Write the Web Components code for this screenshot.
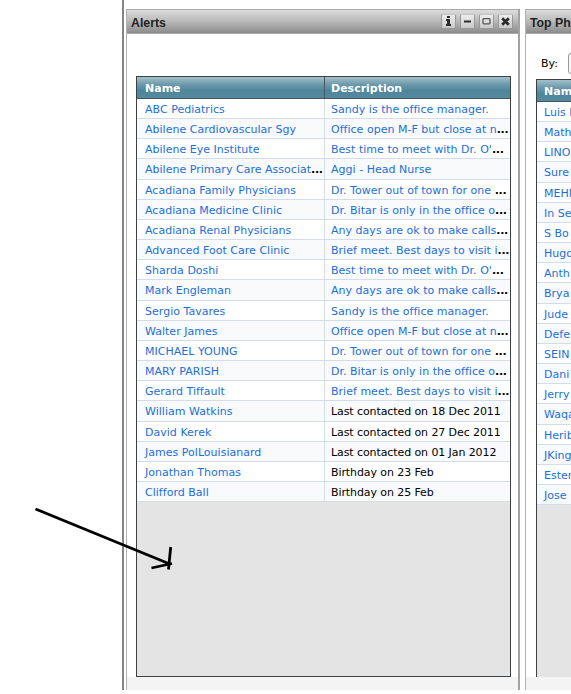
<!DOCTYPE html>
<html lang="en">
<head>
<meta charset="utf-8">
<title>Home</title>
<style>
  html, body { margin: 0; height: 100%; overflow: hidden; background: #fff; }
  body { font: 11px/20px "DejaVu Sans", sans-serif; color: #000; }
</style>
</head>
<body>
<crm-dashboard></crm-dashboard>

<script>
/* ---------- data ---------- */

const ALERTS = [
  ['ABC Pediatrics', 'Sandy is the office manager.'],
  ['Abilene Cardiovascular Sgy', 'Office open M-F but close at n...'],
  ['Abilene Eye Institute', "Best time to meet with Dr. O'..."],
  ['Abilene Primary Care Associat...', 'Aggi - Head Nurse'],
  ['Acadiana Family Physicians', 'Dr. Tower out of town for one ...'],
  ['Acadiana Medicine Clinic', 'Dr. Bitar is only in the office o...'],
  ['Acadiana Renal Physicians', 'Any days are ok to make calls...'],
  ['Advanced Foot Care Clinic', 'Brief meet. Best days to visit i...'],
  ['Sharda Doshi', "Best time to meet with Dr. O'..."],
  ['Mark Engleman', 'Any days are ok to make calls...'],
  ['Sergio Tavares', 'Sandy is the office manager.'],
  ['Walter James', 'Office open M-F but close at n...'],
  ['MICHAEL YOUNG', 'Dr. Tower out of town for one ...'],
  ['MARY PARISH', 'Dr. Bitar is only in the office o...'],
  ['Gerard Tiffault', 'Brief meet. Best days to visit i...'],
  ['William Watkins', 'Last contacted on 18 Dec 2011', true],
  ['David Kerek', 'Last contacted on 27 Dec 2011', true],
  ['James PolLouisianard', 'Last contacted on 01 Jan 2012', true],
  ['Jonathan Thomas', 'Birthday on 23 Feb', true],
  ['Clifford Ball', 'Birthday on 25 Feb', true],
];

const PHYSICIANS = [
  'Luis P', 'Math', 'LINO', 'Sure', 'MEHM', 'In Se', 'S Bo', 'Hugo', 'Anth',
  'Brya', 'Jude', 'Defe', 'SEIN', 'Dani', 'Jerry', 'Waqa', 'Herib', 'JKing', 'Ester', 'Jose',
];

/* ---------- base ---------- */

class BaseElement extends HTMLElement {
  constructor() {
    super();
    this.attachShadow({ mode: 'open' });
  }

  connectedCallback() {
    this.shadowRoot.innerHTML = this.render();
  }
}

/* ---------- <crm-tool> header button ---------- */

const TOOLS = {
  info: '<path d="M6 2h3v2H6zM5 5h4v5h1v2H5v-2h1V7H5z"/>',
  minimize: '<path d="M4 6.5h7v2H4z"/>',
  maximize: '<rect x="4" y="4.7" width="7" height="5.2" rx=".8" fill="none" stroke="#555" stroke-width="1.3"/>',
  close: '<path d="M4.2 4.2l6.6 6.6M10.8 4.2l-6.6 6.6" fill="none" stroke="#2c2c2c" stroke-width="2.8"/>',
};

class CrmTool extends BaseElement {
  render() {
    return `
      <style>
        :host {
          box-sizing: border-box;
          width: 15px;
          height: 15px;
          border: 1px solid #999;
          border-top-color: #c4c4c4;
          border-radius: 2px;
          background: linear-gradient(#ededed, #c9c9c9);
        }
        svg { display: block; margin: -1px; fill: #2c2c2c; }
      </style>
      <svg width="15" height="15" viewBox="0 0 15 15">${TOOLS[this.getAttribute('icon')]}</svg>`;
  }
}
customElements.define('crm-tool', CrmTool);

/* ---------- <crm-portlet> titled panel ---------- */

class CrmPortlet extends BaseElement {
  render() {
    return `
      <style>
        :host {
          box-sizing: border-box;
          display: flex;
          flex-direction: column;
          width: 394px;
          flex: none;
          border-left: 1px solid #b2b2b2;
          border-right: 2px solid #a2a2a2;
          background: #f4f4f4;
        }
        header {
          box-sizing: border-box;
          display: flex;
          align-items: center;
          gap: 4px;
          height: 25px;
          padding: 0 5px 0 4px;
          border-top: 1px solid #aaa;
          border-bottom: 1px solid #a9a9a9;
          background: linear-gradient(#dcdcdc, #bcbcbc 45%, #8c8c8c);
        }
        h2 {
          flex: 1;
          margin: 0;
          padding-top: 2px;
          font: bold 12.3px/20px "Liberation Sans", sans-serif;
          color: #222;
          white-space: nowrap;
        }
        .body {
          box-sizing: border-box;
          height: 643px;
          padding: 0 7px 0 var(--inset, 9px);
          background: #fff;
          display: flex;
          flex-direction: column;
        }
      </style>
      <header><h2>${this.getAttribute('heading')}</h2><slot name="tools"></slot></header>
      <div class="body"><slot></slot></div>`;
  }
}
customElements.define('crm-portlet', CrmPortlet);

/* ---------- <crm-grid> table with a header and striped rows ---------- */

class CrmGrid extends BaseElement {
  set data({ columns, rows }) {
    this._columns = columns;
    this._rows = rows;
  }

  // Cut-off text ends in dots that keep the plain text colour
  cell(text, plain) {
    const cut = text.endsWith('...');
    const label = cut ? text.slice(0, -3) : text;
    return `<div class="cell"><span class="${plain ? 'plain' : 'link'}">${label}</span>${cut ? '<b>...</b>' : ''}</div>`;
  }

  render() {
    const head = this._columns.map((c) => `<div class="cell">${c}</div>`).join('');
    const rows = this._rows.map(([name, text, plain]) => `
      <div class="row">${this.cell(name)}${text ? this.cell(text, plain) : ''}</div>`).join('');
    return `
      <style>
        :host {
          box-sizing: border-box;
          display: flex;
          flex-direction: column;
          flex: 1;
          min-height: 0;
          border: 1px solid #3c4043;
          background: #e4e4e4;
        }
        .head, .row { display: flex; flex: none; }
        .head {
          box-sizing: border-box;
          height: 22px;
          border-bottom: 1px solid #48565c;
          background: linear-gradient(#a3c0cb, #6d9aac 35%, #4f859a 65%, #5589a0);
          color: #fff;
          font-weight: bold;
          line-height: 24px;
        }
        .row { height: 20.16px; background: #fff; }
        .row:nth-of-type(odd) { background: #f9fafc; }
        .cell {
          box-sizing: border-box;
          flex: 1;
          min-width: 0;
          padding-left: 6px;
          white-space: pre;
          overflow: hidden;
        }
        .cell:first-child { padding-left: 8px; }
        .row .cell { border-bottom: 1px solid #d3dcea; line-height: 22px; }
        .cell:first-child:not(:last-child) { flex: 0 0 188px; border-right: 1px solid #d3dcea; }
        .head .cell:first-child:not(:last-child) { border-right-color: #48565c; }
        .cell:only-child { padding-left: 7px; }
        .link { color: #1b6fd9; letter-spacing: .02px; }
        .plain { letter-spacing: -.09px; }
        b { letter-spacing: -.3px; }
      </style>
      <div class="head">${head}</div>${rows}`;
  }
}
customElements.define('crm-grid', CrmGrid);

/* ---------- <crm-filter> "By:" select row ---------- */

class CrmFilter extends BaseElement {
  render() {
    return `
      <style>
        :host { box-sizing: border-box; display: flex; align-items: center; gap: 10px; height: 45px; padding: 14px 0 0 5px; flex: none; }
        .select { box-sizing: border-box; width: 120px; height: 21px; border: 1px solid #999; border-radius: 3px; background: #f8f8f8; }
      </style>
      <span><slot></slot></span><div class="select"></div>`;
  }
}
customElements.define('crm-filter', CrmFilter);

/* ---------- <crm-pointer> hand-drawn arrow ---------- */

class CrmPointer extends BaseElement {
  render() {
    return `
      <style>
        :host { position: absolute; left: 30px; top: 500px; }
        svg { display: block; fill: none; stroke: #000; stroke-width: 2.8; }
      </style>
      <svg width="150" height="80" viewBox="0 0 150 80">
        <path d="M5.5 9L141 64.5M140.7 47L138.5 69.5M121.5 68L142 63.5"/>
      </svg>`;
  }
}
customElements.define('crm-pointer', CrmPointer);

/* ---------- <crm-dashboard> ---------- */

class CrmDashboard extends BaseElement {
  connectedCallback() {
    this.shadowRoot.innerHTML = `
      <style>
        :host { display: flex; height: 690px; overflow: hidden; position: relative; }
        .side { box-sizing: border-box; flex: none; width: 124px; border-right: 2px solid #858585; }
        .main { display: flex; flex: none; gap: 5px; padding: 9px 0 0 2px; }
        .wide { --inset: 10px; }
        .alerts { margin-top: 42px; }
        .physicians { border-bottom: none; }
      </style>
      <div class="side"></div>
      <div class="main">
        <crm-portlet heading="Alerts">
          <crm-tool slot="tools" icon="info"></crm-tool>
          <crm-tool slot="tools" icon="minimize"></crm-tool>
          <crm-tool slot="tools" icon="maximize"></crm-tool>
          <crm-tool slot="tools" icon="close"></crm-tool>
        </crm-portlet>
        <crm-portlet class="wide" heading="Top Ph">
          <crm-filter>By:</crm-filter>
        </crm-portlet>
      </div>
      <crm-pointer></crm-pointer>`;

    const [left, right] = this.shadowRoot.querySelectorAll('crm-portlet');
    const alerts = document.createElement('crm-grid');
    alerts.className = 'alerts';
    alerts.data = { columns: ['Name', 'Description'], rows: ALERTS };
    left.append(alerts);

    const physicians = document.createElement('crm-grid');
    physicians.className = 'physicians';
    physicians.data = { columns: ['Name'], rows: PHYSICIANS.map((name) => [name]) };
    right.append(physicians);
  }
}
customElements.define('crm-dashboard', CrmDashboard);
</script>
</body>
</html>
